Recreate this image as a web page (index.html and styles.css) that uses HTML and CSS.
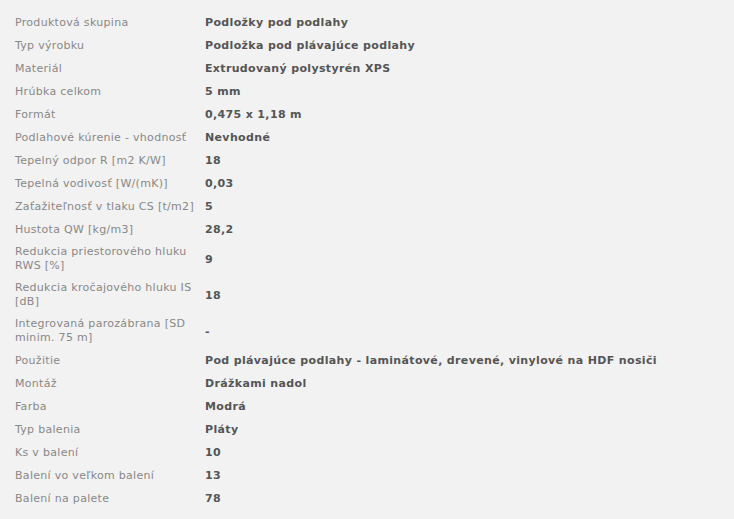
FILE: index.html
```html
<!DOCTYPE html>
<html lang="sk">
<head>
<meta charset="utf-8">
<title>Parametre</title>
<link rel="stylesheet" href="styles.css">
</head>
<body>
<div class="specs">
<table class="spec-table">
<tbody>
<tr><td class="label">Produktová skupina</td><td class="value">Podložky pod podlahy</td></tr>
<tr><td class="label">Typ výrobku</td><td class="value">Podložka pod plávajúce podlahy</td></tr>
<tr><td class="label">Materiál</td><td class="value">Extrudovaný polystyrén XPS</td></tr>
<tr><td class="label">Hrúbka celkom</td><td class="value">5 mm</td></tr>
<tr><td class="label">Formát</td><td class="value">0,475 x 1,18 m</td></tr>
<tr><td class="label">Podlahové kúrenie - vhodnosť</td><td class="value">Nevhodné</td></tr>
<tr><td class="label">Tepelný odpor R [m2 K/W]</td><td class="value">18</td></tr>
<tr><td class="label">Tepelná vodivosť [W/(mK)]</td><td class="value">0,03</td></tr>
<tr><td class="label">Zaťažiteľnosť v tlaku CS [t/m2]</td><td class="value">5</td></tr>
<tr><td class="label">Hustota QW [kg/m3]</td><td class="value">28,2</td></tr>
<tr><td class="label">Redukcia priestorového hluku RWS [%]</td><td class="value">9</td></tr>
<tr><td class="label">Redukcia kročajového hluku IS [dB]</td><td class="value">18</td></tr>
<tr><td class="label">Integrovaná parozábrana [SD minim. 75 m]</td><td class="value">-</td></tr>
<tr><td class="label">Použitie</td><td class="value">Pod plávajúce podlahy - laminátové, drevené, vinylové na HDF nosiči</td></tr>
<tr><td class="label">Montáž</td><td class="value">Drážkami nadol</td></tr>
<tr><td class="label">Farba</td><td class="value">Modrá</td></tr>
<tr><td class="label">Typ balenia</td><td class="value">Pláty</td></tr>
<tr><td class="label">Ks v balení</td><td class="value">10</td></tr>
<tr><td class="label">Balení vo veľkom balení</td><td class="value">13</td></tr>
<tr><td class="label">Balení na palete</td><td class="value">78</td></tr>
</tbody>
</table>
</div>
</body>
</html>
```
FILE: styles.css
```css
html, body {
  margin: 0;
  padding: 0;
  background: #f2f2f2;
}
body {
  font-family: "DejaVu Sans", Verdana, sans-serif;
  font-size: 11px;
}
.specs {
  padding: 11px 15px 10px;
}
.spec-table {
  border-collapse: collapse;
}
.spec-table td {
  padding: 4px 0;
  vertical-align: middle;
}
.label {
  width: 183px;
  padding-right: 7px !important;
  color: #888;
  line-height: 14px;
  letter-spacing: 0.3px;
}
.value {
  color: #555;
  font-weight: bold;
  line-height: 15px;
  letter-spacing: 0.35px;
}
```
